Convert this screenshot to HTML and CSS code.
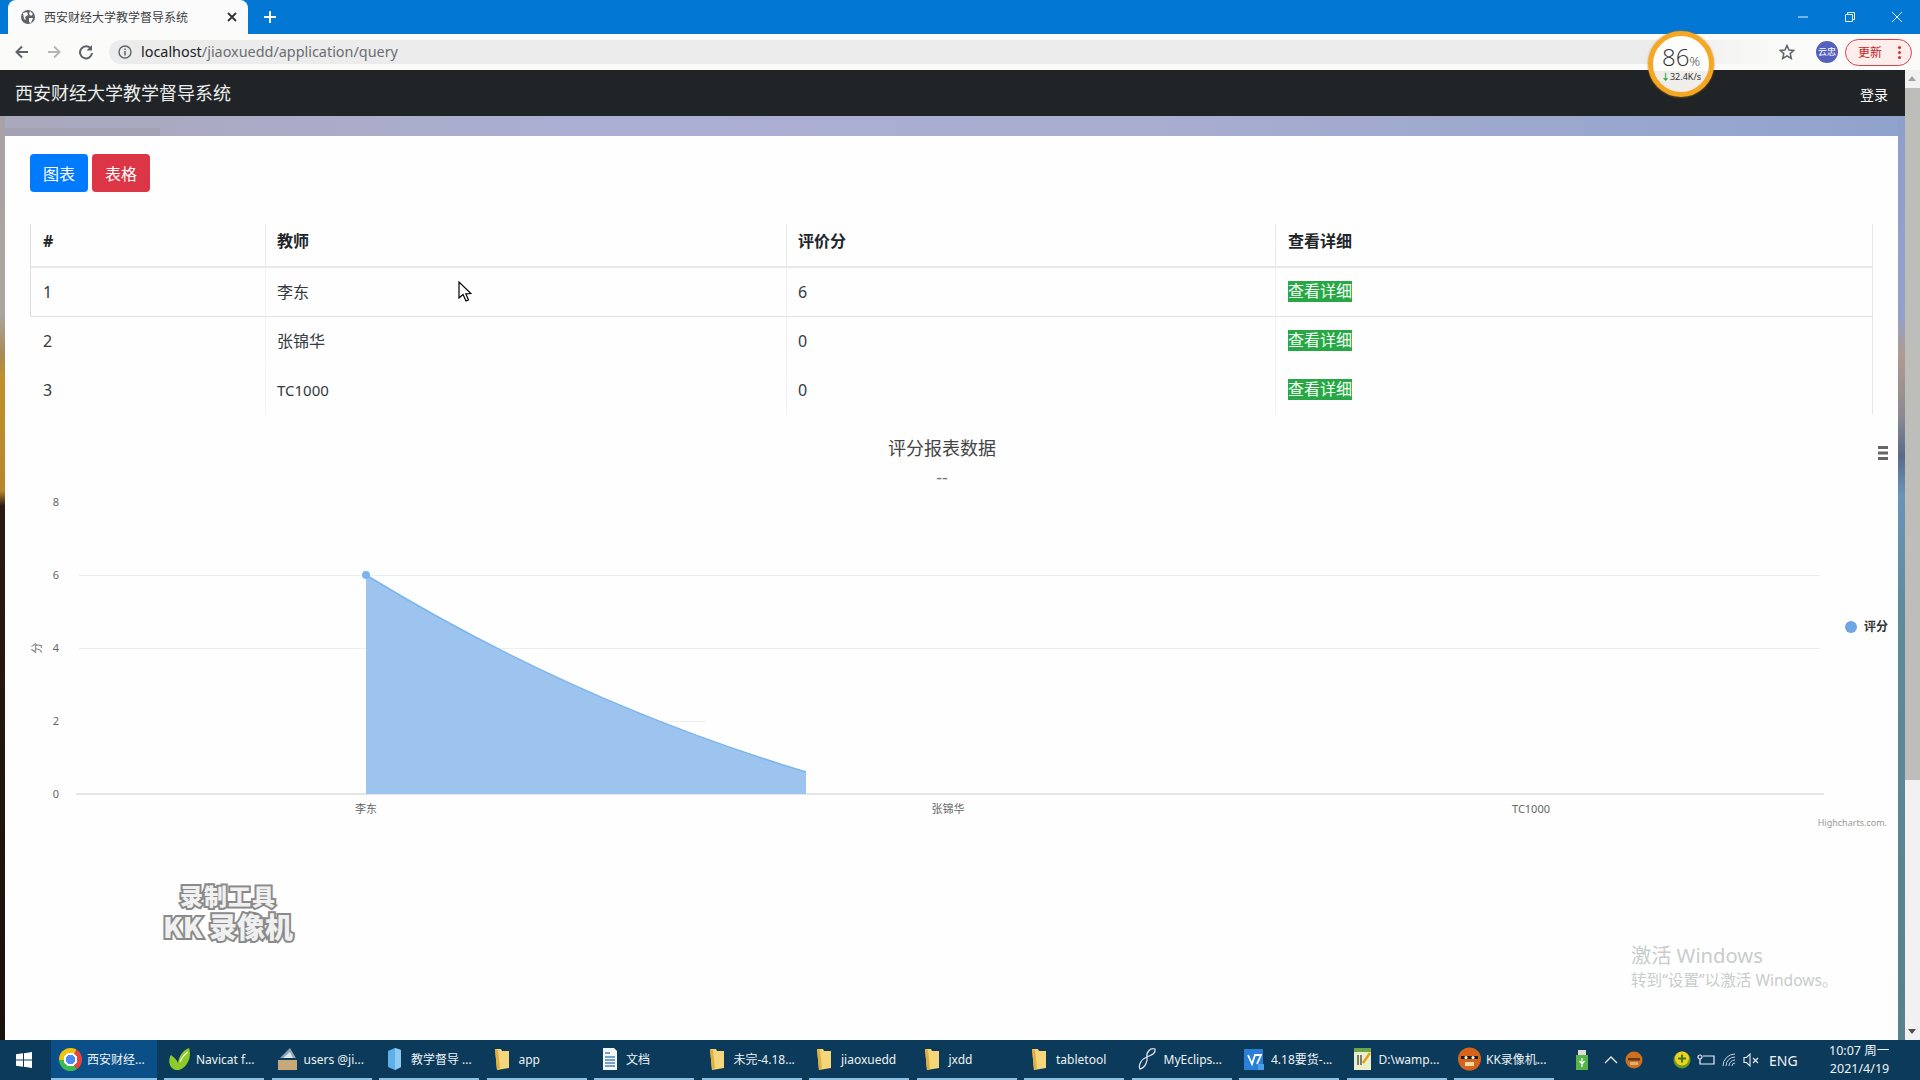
FILE: index.html
```html
<!DOCTYPE html>
<html>
<head>
    <title>西安财经大学教学督导系统</title>
    <link rel="stylesheet" href="styles.css">
</head>
<body>
    <svg class="defs" width="0" height="0">
        <defs>
            <symbol id="folder" viewBox="0 0 23 26">
                <path d="M4 3 L10 3 L11 5 L18 5 L18 22 L6 24 Z" fill="#f6d67a"/>
                <path d="M4 3 L6 24 L9 22 L7 4 Z" fill="#e0b040"/>
            </symbol>
        </defs>
    </svg>

    <div class="window">
        <div class="tabstrip">
            <div class="tab">
                <svg class="tab-globe" width="16" height="16" viewBox="0 0 16 16">
                    <circle cx="8" cy="8" r="7" fill="#5f6368"/>
                    <path d="M3 4 L7 3 L8 6 L5 8 L6 11 L4 10 Z M10 2 L13 5 L11 7 L9 5 Z M9 9 L13 9 L11 14 L9 13 Z" fill="#fafafa"/>
                </svg>
                <span class="tab-title">西安财经大学教学督导系统</span>
                <svg class="tab-close" width="10" height="10" viewBox="0 0 10 10">
                    <path d="M1 1 L9 9 M9 1 L1 9" stroke="#333" stroke-width="1.8"/>
                </svg>
            </div>
            <svg class="tab-new" width="12" height="12" viewBox="0 0 12 12">
                <path d="M6 0 V12 M0 6 H12" stroke="#fff" stroke-width="2"/>
            </svg>
            <div class="winbtns">
                <svg width="12" height="12" viewBox="0 0 12 12"><path d="M1 6 H11" stroke="#e8f2fb" stroke-width="1"/></svg>
                <svg width="12" height="12" viewBox="0 0 12 12"><path d="M1.5 3.5 H8.5 V10.5 H1.5 Z M3.5 3.5 V1.5 H10.5 V8.5 H8.5" fill="none" stroke="#e8f2fb" stroke-width="1"/></svg>
                <svg width="12" height="12" viewBox="0 0 12 12"><path d="M1 1 L11 11 M11 1 L1 11" stroke="#e8f2fb" stroke-width="1"/></svg>
            </div>
        </div>

        <div class="toolbar">
            <svg class="nav-icon" width="16" height="16" viewBox="0 0 16 16"><path d="M14 8 H3 M8 2.5 L2.5 8 L8 13.5" fill="none" stroke="#5f6368" stroke-width="2"/></svg>
            <svg class="nav-icon" width="16" height="16" viewBox="0 0 16 16"><path d="M2 8 H13 M8 2.5 L13.5 8 L8 13.5" fill="none" stroke="#b4b6b8" stroke-width="2"/></svg>
            <svg class="nav-icon" width="16" height="16" viewBox="0 0 16 16"><path d="M13 5 A6 6 0 1 0 14 9" fill="none" stroke="#5f6368" stroke-width="2"/><path d="M14 1 V6.5 H8.5 Z" fill="#5f6368"/></svg>
            <div class="omnibox">
                <svg class="info-icon" width="14" height="14" viewBox="0 0 14 14">
                    <circle cx="7" cy="7" r="6" fill="none" stroke="#5f6368" stroke-width="1.4"/>
                    <path d="M7 6 V10.5 M7 3.5 V5" stroke="#5f6368" stroke-width="1.5"/>
                </svg>
                <span class="url"><span class="url-host">localhost</span>/jiaoxuedd/application/query</span>
                <svg class="star" width="16" height="16" viewBox="0 0 16 16">
                    <path d="M8 1.5 L10 6 L14.8 6.4 L11.2 9.6 L12.3 14.4 L8 11.8 L3.7 14.4 L4.8 9.6 L1.2 6.4 L6 6 Z" fill="none" stroke="#5f6368" stroke-width="1.5"/>
                </svg>
            </div>
            <div class="avatar">云忠</div>
            <div class="update">
                <span>更新</span>
                <span class="update-dots"></span>
            </div>
        </div>

        <div class="main">
            <div class="page">
                <nav class="navbar">
                    <span class="brand">西安财经大学教学督导系统</span>
                    <a class="login">登录</a>
                </nav>
                <div class="backdrop">
                    <div class="content">
                        <div class="btn-row">
                            <button class="btn btn-blue">图表</button>
                            <button class="btn btn-red">表格</button>
                        </div>

                        <table class="score-table">
                            <thead>
                                <tr>
                                    <th class="col-id">#</th>
                                    <th class="col-teacher">教师</th>
                                    <th class="col-score">评价分</th>
                                    <th class="col-link">查看详细</th>
                                </tr>
                            </thead>
                            <tbody>
                                <tr class="row-first">
                                    <td>1</td>
                                    <td>李东</td>
                                    <td>6</td>
                                    <td><span class="badge">查看详细</span></td>
                                </tr>
                                <tr>
                                    <td>2</td>
                                    <td>张锦华</td>
                                    <td>0</td>
                                    <td><span class="badge">查看详细</span></td>
                                </tr>
                                <tr>
                                    <td>3</td>
                                    <td class="latin">TC1000</td>
                                    <td>0</td>
                                    <td><span class="badge">查看详细</span></td>
                                </tr>
                            </tbody>
                        </table>

                        <svg class="chart" width="1893" height="420" viewBox="5 425 1893 420">
                            <text class="chart-title" x="942" y="455" text-anchor="middle">评分报表数据</text>
                            <text class="chart-sub" x="942" y="484" text-anchor="middle">--</text>
                            <path d="M1878 447.5 H1888 M1878 453 H1888 M1878 458.5 H1888" stroke="#666" stroke-width="3"/>

                            <path d="M79 575.5 H1820 M79 648.5 H1820 M660 721.5 H705" stroke="#eeeeee" stroke-width="1"/>
                            <path d="M76 794 H1824" stroke="#d8dce4" stroke-width="1.5"/>

                            <text class="axis-label" x="56" y="506" text-anchor="middle">8</text>
                            <text class="axis-label" x="56" y="579" text-anchor="middle">6</text>
                            <text class="axis-label" x="56" y="652" text-anchor="middle">4</text>
                            <text class="axis-label" x="56" y="725" text-anchor="middle">2</text>
                            <text class="axis-label" x="56" y="798" text-anchor="middle">0</text>
                            <text class="axis-label" x="37" y="652" text-anchor="middle" transform="rotate(-90 37 648)">分</text>

                            <path d="M366 575 C513 665 660 728 806 772 V794 H366 Z" fill="#9cc4ee"/>
                            <path d="M366 575 C513 665 660 728 806 772" fill="none" stroke="#7cb5ec" stroke-width="1.5"/>
                            <circle cx="366" cy="575" r="4" fill="#7cb5ec"/>

                            <text class="axis-label" x="366" y="813" text-anchor="middle">李东</text>
                            <text class="axis-label" x="948" y="813" text-anchor="middle">张锦华</text>
                            <text class="axis-label" x="1531" y="813" text-anchor="middle">TC1000</text>

                            <circle cx="1851" cy="627" r="6" fill="#6ea6e4"/>
                            <text class="legend" x="1864" y="631">评分</text>
                            <text class="credit" x="1887" y="826" text-anchor="end">Highcharts.com.</text>
                        </svg>

                        <div class="watermark">
                            <div class="wm-top">录制工具</div>
                            <div class="wm-bottom">KK 录像机</div>
                        </div>

                        <div class="activate">
                            <div class="activate-big">激活 Windows</div>
                            <div class="activate-small">转到“设置”以激活 Windows。</div>
                        </div>

                        <svg class="cursor" width="14" height="22" viewBox="0 0 14 22">
                            <path d="M1 1 L1 17 L5 13.5 L8 20 L10.5 19 L7.8 12.8 L13 12.5 Z" fill="#fff" stroke="#000" stroke-width="1.2"/>
                        </svg>
                    </div>
                </div>
            </div>
            <div class="scrollbar">
                <div class="scroll-up"></div>
                <div class="scroll-thumb"></div>
                <div class="scroll-track"></div>
                <div class="scroll-down"></div>
            </div>
        </div>

        <div class="taskbar">
            <div class="start">
                <svg width="16" height="16" viewBox="0 0 16 16">
                    <path d="M0 2.3 L7 1.3 V7.5 H0 Z M8 1.2 L16 0 V7.5 H8 Z M0 8.5 H7 V14.7 L0 13.7 Z M8 8.5 H16 V16 L8 14.8 Z" fill="#fff"/>
                </svg>
            </div>
            <div class="task task-active">
                <span class="chrome-icon"></span>
                <span>西安财经...</span>
            </div>
            <div class="task">
                <svg width="23" height="26" viewBox="0 0 23 26"><path d="M11 24 C2 25 -1 15 3 9 C6 11 9 14 10 17 C11 10 15 4 21 2 C24 10 20 21 11 24 Z" fill="#8ccb2a"/><path d="M12 16 C14 11 17 8 20 6" stroke="#e8f6c0" stroke-width="1.5" fill="none"/></svg>
                <span>Navicat f...</span>
            </div>
            <div class="task">
                <svg width="23" height="26" viewBox="0 0 23 26"><path d="M2 14 H21 V24 H2 Z" fill="#c8a878"/><path d="M4 12 L14 2 L20 12 Z" fill="#8ea4b8"/><path d="M7 12 L14 6 L17 12 Z" fill="#dfe6ee"/></svg>
                <span>users @ji...</span>
            </div>
            <div class="task">
                <svg width="23" height="26" viewBox="0 0 23 26"><path d="M5 5 L12 2 L18 4 V21 L12 24 L5 21 Z" fill="#5fb0ea"/><path d="M12 2 L18 4 V21 L12 24 Z" fill="#8fcaf2"/></svg>
                <span>教学督导 ...</span>
            </div>
            <div class="task">
                <svg width="23" height="26"><use href="#folder"/></svg>
                <span>app</span>
            </div>
            <div class="task">
                <svg width="23" height="26" viewBox="0 0 23 26"><path d="M5 2 H16 L19 5 V24 H5 Z" fill="#f4f6f8"/><path d="M7 7 H12 M7 11 H17 M7 14 H17 M7 17 H17 M7 20 H17" stroke="#4f82b8" stroke-width="1.5"/></svg>
                <span>文档</span>
            </div>
            <div class="task">
                <svg width="23" height="26"><use href="#folder"/></svg>
                <span>未完-4.18...</span>
            </div>
            <div class="task">
                <svg width="23" height="26"><use href="#folder"/></svg>
                <span>jiaoxuedd</span>
            </div>
            <div class="task">
                <svg width="23" height="26"><use href="#folder"/></svg>
                <span>jxdd</span>
            </div>
            <div class="task">
                <svg width="23" height="26"><use href="#folder"/></svg>
                <span>tabletool</span>
            </div>
            <div class="task">
                <svg width="23" height="26" viewBox="0 0 23 26"><path d="M19 3 C14 1 10 7 11 11 C12 15 9 22 4 23 C2 20 5 13 11 11 C15 9 20 8 19 3 Z" fill="none" stroke="#d8dfe8" stroke-width="1.3"/></svg>
                <span>MyEclips...</span>
            </div>
            <div class="task">
                <svg width="23" height="26" viewBox="0 0 23 26"><path d="M1 3 H20 V24 H1 Z" fill="#2a7fd8"/><path d="M5 9 L9 18 L12 9 H18 L14 18" fill="none" stroke="#fff" stroke-width="1.8"/><path d="M15 18 H21 V24 H15 Z" fill="#4aa0e8"/></svg>
                <span>4.18要货-...</span>
            </div>
            <div class="task">
                <svg width="23" height="26" viewBox="0 0 23 26"><path d="M3 2 H20 V24 H3 Z" fill="#eaf0c8"/><path d="M3 2 H20 V6 H3 Z" fill="#6aa84a"/><path d="M7 9 V19 M10 9 V19" stroke="#555" stroke-width="1.5"/><path d="M12 17 L19 7" stroke="#e8a020" stroke-width="2.5"/></svg>
                <span>D:\wamp...</span>
            </div>
            <div class="task">
                <svg width="23" height="26" viewBox="0 0 23 26"><circle cx="11.5" cy="13" r="11.5" fill="#d8641c"/><path d="M3 10 H20 V13 H3 Z" fill="#1e1e1e"/><path d="M7 16 H16 V20 H7 Z" fill="#f2d9a8"/><circle cx="8" cy="11.5" r="1.5" fill="#fff"/><circle cx="15" cy="11.5" r="1.5" fill="#fff"/></svg>
                <span>KK录像机...</span>
            </div>

            <div class="tray">
                <svg width="12" height="22" viewBox="0 0 12 22"><path d="M2 1 H10 V6 H2 Z" fill="#ddd"/><path d="M0 6 H12 V21 H0 Z" fill="#55b548"/><path d="M6 9 V18 M3.5 12 L6 15 L8.5 12" stroke="#fff" stroke-width="1.2" fill="none"/></svg>
                <svg width="14" height="10" viewBox="0 0 14 10"><path d="M1 8 L7 2 L13 8" fill="none" stroke="#eef" stroke-width="1.3"/></svg>
                <svg width="18" height="18" viewBox="0 0 18 18"><circle cx="9" cy="9" r="8.5" fill="#d0701e"/><path d="M3 7 H15 V9.5 H3 Z" fill="#5a3a1a"/><path d="M5 11 H13 V14 H5 Z" fill="#e0b070"/></svg>
                <svg width="18" height="18" viewBox="0 0 18 18"><circle cx="9" cy="9" r="8.5" fill="#6a9a1a"/><circle cx="9" cy="7.5" r="7" fill="#f0d020"/><path d="M9 3.5 V11.5 M5 7.5 H13" stroke="#3a7a18" stroke-width="2"/></svg>
                <svg width="18" height="14" viewBox="0 0 18 14"><path d="M6 3 H17 V11 H6" fill="none" stroke="#eef" stroke-width="1.2"/><circle cx="3" cy="4" r="2" fill="none" stroke="#eef" stroke-width="1.2"/><path d="M3 6 V11 H6" fill="none" stroke="#eef" stroke-width="1.2"/></svg>
                <svg width="16" height="14" viewBox="0 0 16 14"><path d="M1 13 A12 12 0 0 1 13 1 M4 13 A9 9 0 0 1 13 4 M7 13 A6 6 0 0 1 13 7 M10 13 A3 3 0 0 1 13 10" fill="none" stroke="#c8d4dc" stroke-width="1"/></svg>
                <svg width="16" height="14" viewBox="0 0 16 14"><path d="M1 4.5 H3.5 L7 1 V13 L3.5 9.5 H1 Z" fill="none" stroke="#eef" stroke-width="1.1"/><path d="M10 5 L15 10 M15 5 L10 10" stroke="#eef" stroke-width="1.1"/></svg>
                <span class="lang">ENG</span>
                <div class="clock">
                    <div>10:07 周一</div>
                    <div>2021/4/19</div>
                </div>
            </div>
        </div>

        <div class="speedball">
            <div class="speed-pct">86<small>%</small></div>
            <div class="speed-rate"><b>↓</b>32.4K/s</div>
        </div>
    </div>
</body>
</html>
```

FILE: styles.css
```css
body {
    margin: 0;
    font-family: "Noto Sans", "Noto Sans CJK SC", sans-serif;
    overflow: hidden;
}
.defs {
    position: absolute;
}
.window {
    position: relative;
    display: flex;
    flex-direction: column;
    height: 1080px;
    width: 1920px;
}

/* browser tabs */
.tabstrip {
    display: flex;
    align-items: flex-end;
    height: 34px;
    padding-left: 8px;
    background-color: #0277d3;
}
.tab {
    display: flex;
    align-items: center;
    width: 240px;
    height: 34px;
    box-sizing: border-box;
    padding: 0 11px 0 12px;
    background-color: #fbfbfb;
    border-radius: 8px 8px 0 0;
}
.tab-title {
    flex: 1;
    margin-left: 8px;
    font-size: 12px;
    color: #3c4043;
}
.tab-new {
    margin: 0 0 11px 16px;
}
.winbtns {
    display: flex;
    align-items: center;
    gap: 35px;
    height: 34px;
    margin-left: auto;
    padding-right: 17px;
}

/* address bar */
.toolbar {
    display: flex;
    align-items: center;
    height: 36px;
    padding-left: 14px;
    background-color: #fbfbf9;
}
.nav-icon {
    margin-right: 16px;
}
.omnibox {
    display: flex;
    align-items: center;
    width: 1690px;
    height: 24px;
    margin-left: -1px;
    padding: 0 4px 0 9px;
    box-sizing: border-box;
    border-radius: 12px 0 0 12px;
    background: linear-gradient(to right, #ececec 92%, #f5f5f3 96%, #fbfbf9 100%);
}
.info-icon {
    margin-right: 9px;
}
.url {
    flex: 1;
    margin-top: -2px;
    font-size: 14.4px;
    color: #6a6e72;
}
.url-host {
    color: #202124;
}
.avatar {
    width: 22px;
    height: 22px;
    margin-left: 17px;
    border-radius: 50%;
    background-color: #5660bd;
    color: #fff;
    font-size: 9px;
    line-height: 22px;
    text-align: center;
}
.update {
    display: flex;
    align-items: center;
    justify-content: space-between;
    width: 67px;
    height: 27px;
    margin-left: 7px;
    padding: 0 10px 0 12px;
    box-sizing: border-box;
    border: 1px solid #d8404c;
    border-radius: 14px;
    background-color: #fdeeec;
    color: #c5221f;
    font-size: 12px;
}
.update-dots {
    width: 3px;
    height: 3px;
    border-radius: 50%;
    background-color: #d93025;
    box-shadow: 0 -5px 0 #d93025, 0 5px 0 #d93025;
}

/* page area */
.main {
    display: flex;
    flex: 1;
    min-height: 0;
}
.page {
    display: flex;
    flex-direction: column;
    flex: 1;
}
.navbar {
    display: flex;
    align-items: center;
    justify-content: space-between;
    height: 46px;
    padding: 0 17px 0 15px;
    background-color: #212427;
    color: #fff;
}
.brand {
    margin-top: -3px;
    font-size: 18px;
    color: #eceeee;
}
.login {
    margin-top: 2px;
    font-size: 14px;
}
.backdrop {
    display: flex;
    flex: 1;
    min-height: 0;
    padding: 20px 7px 0 5px;
    background-image:
        linear-gradient(to bottom, #a8a2a8 0, #aba49e 200px, #a88a50 240px, #c0902c 260px, #b88628 375px, #2a1a12 390px, #1a100c 924px),
        linear-gradient(to bottom, #8f9fcc 0, #93a2c8 200px, #b09a90 240px, #8a8a92 300px, #5a6a8a 340px, #6a94b8 380px, #5f8a9a 500px, #58808e 924px),
        linear-gradient(#a3a2b4, #a3a2b4),
        linear-gradient(to right, #a9a8bc 0, #abaed2 30%, #a9add0 60%, #90a3cc 100%);
    background-size: 5px 100%, 7px 100%, 160px 8px, 100% 20px;
    background-position: left top, right top, left 12px, left top;
    background-repeat: no-repeat;
}
.content {
    position: relative;
    flex: 1;
    padding-top: 18px;
    background-color: #fdfefd;
    color: #343a40;
}
.btn-row {
    display: flex;
    gap: 4px;
    padding-left: 25px;
    margin-bottom: 32px;
}
.btn {
    width: 58px;
    height: 38px;
    padding: 0;
    border: none;
    border-radius: 4px;
    color: #fff;
    font-family: inherit;
    font-size: 16px;
}
.btn-blue {
    background-color: #007bff;
}
.btn-red {
    background-color: #dc3545;
}

/* table */
.score-table {
    width: 1843px;
    margin-left: 25px;
    border-collapse: separate;
    border-spacing: 0;
    table-layout: fixed;
    font-size: 16px;
}
.score-table th {
    height: 24px;
    padding: 5px 12px 13px 11px;
    border-left: 1px solid #e8ebee;
    border-bottom: 2px solid #e6e8ea;
    color: #212529;
    text-align: left;
    line-height: 24px;
}
.score-table th:last-child,
.score-table td:last-child {
    border-right: 1px solid #e4e6e8;
    padding-left: 12px;
}
.score-table td {
    height: 24px;
    padding: 12px 12px 12px 11px;
    border-left: 1px solid #f2f4f4;
    line-height: 24px;
    border-bottom: 1px solid transparent;
}
.score-table td:first-child,
.score-table th:first-child {
    padding-left: 12px;
}
.score-table td:first-child {
    border-left-color: transparent;
}
.score-table th:first-child,
.row-first td:first-child {
    border-left-color: #dcdfe2;
}
.row-first td {
    border-bottom-color: #e0e2e4;
}
.col-id {
    width: 210px;
}
.col-teacher {
    width: 497px;
}
.col-score {
    width: 465px;
}
.latin {
    font-size: 15px;
}
.badge {
    display: inline-block;
    height: 21px;
    margin-top: 1px;
    vertical-align: top;
    background-color: #28a745;
    color: #f4fff6;
    line-height: 21px;
}

/* chart */
.chart {
    display: block;
    margin-top: 10px;
    font-family: "Noto Sans", "Noto Sans CJK SC", sans-serif;
}
.chart-title {
    font-size: 18px;
    fill: #444;
}
.chart-sub {
    font-size: 18px;
    fill: #777;
}
.axis-label {
    font-size: 11px;
    fill: #666;
}
.legend {
    font-size: 12px;
    font-weight: bold;
    fill: #333;
}
.credit {
    font-size: 9px;
    fill: #999;
}

/* overlays */
.watermark {
    position: absolute;
    left: 123px;
    top: 744px;
    width: 200px;
    text-align: center;
    font-weight: 900;
    font-family: "Noto Sans CJK SC", sans-serif;
    color: #f0f0f0;
    -webkit-text-stroke: 4px #8a8a8a;
    paint-order: stroke fill;
}
.wm-top {
    font-size: 23px;
    line-height: 30px;
    letter-spacing: 1px;
}
.wm-bottom {
    font-size: 28px;
    line-height: 32px;
}
.activate {
    position: absolute;
    left: 1626px;
    top: 805px;
    color: #c9cccc;
}
.activate-big {
    font-size: 20.2px;
    line-height: 29px;
}
.activate-small {
    font-size: 15.6px;
    line-height: 20px;
}
.cursor {
    position: absolute;
    left: 453px;
    top: 145px;
}
.speedball {
    position: absolute;
    left: 1648px;
    top: 31px;
    width: 66px;
    height: 66px;
    box-sizing: border-box;
    border: 5px solid #f5a623;
    border-radius: 50%;
    background: linear-gradient(to bottom, #fdfdfb 0, #fdfdfb 62%, #efeeea 62%);
    box-shadow: 0 0 2px #b87a10;
    text-align: center;
    color: #333;
}
.speed-pct {
    margin-top: 9px;
    font-size: 24px;
    font-weight: 300;
    line-height: 24px;
    font-family: "Open Sans", sans-serif;
}
.speed-pct small {
    font-size: 13px;
}
.speed-rate {
    margin-top: -2px;
    font-size: 9px;
    line-height: 12px;
    white-space: nowrap;
}
.speed-rate b {
    color: #1aa33a;
}

/* scrollbar */
.scrollbar {
    display: flex;
    flex-direction: column;
    width: 15px;
    background-color: #f1f1f1;
}
.scroll-up,
.scroll-down {
    position: relative;
    height: 18px;
}
.scroll-up::after {
    content: "";
    position: absolute;
    left: 3px;
    top: 6px;
    border: 4px solid transparent;
    border-top: none;
    border-bottom: 5px solid #a3a3a3;
}
.scroll-down::after {
    content: "";
    position: absolute;
    left: 3px;
    top: 7px;
    border: 4px solid transparent;
    border-bottom: none;
    border-top: 5px solid #505050;
}
.scroll-thumb {
    height: 692px;
    background-color: #bdbdb9;
}
.scroll-track {
    flex: 1;
}

/* taskbar */
.taskbar {
    display: flex;
    height: 40px;
    background-color: #0c3a5a;
    color: #eef3f6;
    font-size: 12px;
}
.start {
    display: flex;
    align-items: center;
    width: 51px;
    padding-left: 16px;
    box-sizing: border-box;
}
.task {
    display: flex;
    align-items: center;
    gap: 5px;
    width: 100px;
    margin-right: 7.5px;
    padding-left: 4px;
    box-sizing: border-box;
    border-bottom: 2px solid #8cc0e4;
    white-space: nowrap;
    overflow: hidden;
}
.task svg {
    flex-shrink: 0;
}
.task-active {
    width: 106px;
    margin-right: 7px;
    padding-left: 8px;
    background-color: #0a4f88;
}
.chrome-icon {
    width: 23px;
    height: 23px;
    flex-shrink: 0;
    border-radius: 50%;
    background:
        radial-gradient(circle, #4c8bf5 0 5px, #fff 5px 7px, transparent 7px),
        conic-gradient(from 30deg, #e8453c 0 33%, #3cba54 33% 66%, #f4c20d 66% 100%);
}
.tray {
    display: grid;
    grid-template-columns: 28px 21px 48px 24px 25px 21px 26px 60px auto;
    align-items: center;
    margin-left: 14.5px;
}
.lang {
    font-size: 14px;
}
.clock {
    font-size: 12.5px;
    line-height: 18px;
    text-align: right;
    white-space: nowrap;
}
```
